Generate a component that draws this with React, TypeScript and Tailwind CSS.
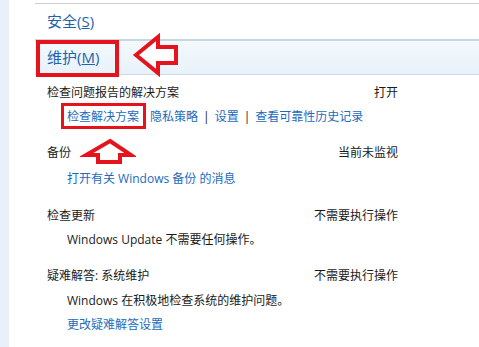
import React from "react";

const font = { fontFamily: '"Open Sans", "Noto Sans CJK SC", "Noto Sans", sans-serif' };

function Row({ left, right, className = "" }: { left: React.ReactNode; right?: React.ReactNode; className?: string }) {
  return (
    <div className={`flex h-[24px] items-center text-[12px] text-[#1a1a1a] ${className}`}>
      <div className="flex-1">{left}</div>
      {right && <div className="w-[120px] text-right">{right}</div>}
    </div>
  );
}

const Sep = () => <span className="mx-[5px] text-[#1a1a1a]">|</span>;

export default function App() {
  return (
    <div className="relative flex h-[347px] w-[479px] overflow-hidden bg-white" style={font}>
      <div className="w-[9px] bg-[#e8f0f9]" />
      <div className="flex flex-1 flex-col pl-[26px]">
        <div className="mt-[3px] h-[1px] bg-[#cdcdcd]" />
        <div className="flex h-[35px] items-center pl-[12px] text-[15px] text-[#1f63ad]">
          安全(<span className="underline">S</span>)
        </div>
        <div className="flex h-[36px] items-center border-t-2 border-b border-t-[#c6d6e2] border-b-[#cddbe5] bg-gradient-to-b from-[#f3f9fd] to-[#e8f2fa] pl-[12px] text-[15px] text-[#1f63ad]">
          维护(<span className="underline">M</span>)
        </div>
        <div className="flex flex-col pl-[12px] pr-[81px] pt-[6px]">
          <Row left="检查问题报告的解决方案" right="打开" />
          <div className="flex h-[24px] items-center pl-[20px] text-[12px] text-[#1b6bbd]">
            <span>检查解决方案</span>
            <span className="ml-[11px]">隐私策略</span>
            <Sep />
            <span>设置</span>
            <Sep />
            <span>查看可靠性历史记录</span>
          </div>

          <Row className="mt-[12px]" left="备份" right="当前未监视" />
          <div className="mt-[2px] flex h-[24px] items-center pl-[20px] text-[12px] text-[#1b6bbd]">
            打开有关 Windows 备份 的消息
          </div>

          <Row className="mt-[13px]" left="检查更新" right="不需要执行操作" />
          <div className="flex h-[24px] items-center pl-[20px] text-[12px] text-[#1a1a1a]">
            Windows Update 不需要任何操作。
          </div>

          <Row className="mt-[12px]" left="疑难解答: 系统维护" right="不需要执行操作" />
          <div className="mt-[1px] flex h-[24px] items-center pl-[20px] text-[12px] text-[#1a1a1a]">
            Windows 在积极地检查系统的维护问题。
          </div>
          <div className="flex h-[24px] items-center pl-[20px] text-[12px] text-[#1b6bbd]">
            更改疑难解答设置
          </div>
        </div>
      </div>

      {/* red highlight boxes */}
      <div className="absolute left-[36px] top-[40px] h-[37px] w-[83px] border-[4px] border-[#e5141c]" />
      <div className="absolute left-[61px] top-[103px] h-[26px] w-[85px] border-[3px] border-[#e5141c]" />

      {/* left arrow */}
      <svg className="absolute left-[130px] top-[31px]" width="52" height="48" viewBox="0 0 52 48">
        <path d="M6 24 L28 6 L28 16 L46 16 L46 32 L28 32 L28 42 Z" fill="white" stroke="#e5141c" strokeWidth="4" strokeLinejoin="miter" />
      </svg>

      {/* up arrow */}
      <svg className="absolute left-[80px] top-[136px]" width="56" height="30" viewBox="0 0 56 30">
        <path d="M30 5 L51 19 L40 19 L40 26 L18 26 L18 19 L6 19 Z" fill="white" stroke="#e5141c" strokeWidth="4" strokeLinejoin="miter" />
      </svg>
    </div>
  );
}
